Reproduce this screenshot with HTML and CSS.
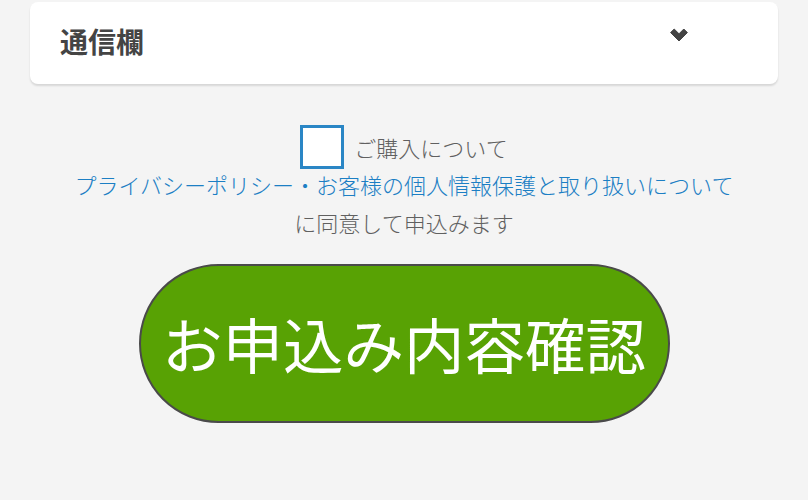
FILE: index.html
```html
<!DOCTYPE html>
<html lang="ja">
<head>
<meta charset="utf-8">
<link rel="stylesheet" href="styles.css">
</head>
<body>
<div class="page">
  <div class="card">
    <h2 class="card-title">通信欄</h2>
    <svg class="chevron" viewBox="0 0 18 14" width="18" height="14" aria-hidden="true">
      <path d="M0.6 4.6 L4.2 1 L9 5.8 L13.8 1 L17.4 4.6 L9 13 Z" fill="#444" stroke="#444" stroke-width="1" stroke-linejoin="round"/>
    </svg>
  </div>

  <div class="agree">
    <label class="agree-row">
      <span class="checkbox"></span>
      <span class="agree-text">ご購入について</span>
    </label>
    <div class="agree-line"><a class="link" href="#">プライバシーポリシー・お客様の個人情報保護と取り扱いについて</a></div>
    <div class="agree-line">に同意して申込みます</div>
  </div>

  <div class="btn-wrap">
    <button class="submit" type="button">お申込み内容確認</button>
  </div>
</div>
</body>
</html>
```

FILE: styles.css
```css
* { box-sizing: border-box; }
html, body {
  margin: 0;
  padding: 0;
  background: #f4f4f4;
  font-family: "Noto Sans CJK JP", "Noto Sans", sans-serif;
}
.page {
  padding: 2px 30px 0;
}
.card {
  background: #fff;
  border-radius: 8px;
  height: 82px;
  box-shadow: 0 2px 2px rgba(0, 0, 0, 0.12);
  display: flex;
  align-items: center;
  justify-content: space-between;
  padding: 0 90px 0 30px;
}
.card-title {
  margin: -4px 0 0;
  font-size: 28px;
  font-weight: 700;
  color: #444;
  line-height: 1;
}
.chevron {
  display: block;
  margin-top: -16px;
}
.agree {
  margin-top: 44px;
  text-align: center;
  font-size: 22px;
  font-weight: 300;
  color: #606060;
}
.agree-row {
  display: flex;
  justify-content: center;
  align-items: center;
  height: 38px;
  gap: 10px;
}
.checkbox {
  flex: none;
  width: 44px;
  height: 44px;
  border: 3px solid #2a86c5;
  background: #fff;
}
.agree-text {
  line-height: 38px;
}
.agree-line {
  line-height: 37.5px;
}
.link {
  color: #1c7fc4;
  text-decoration: none;
}
.btn-wrap {
  display: flex;
  justify-content: center;
  margin-top: 23px;
}
.submit {
  width: 531px;
  height: 159px;
  border: 2px solid #4a4a4a;
  border-radius: 80px;
  background: #58a204;
  color: #fff;
  font-family: "Noto Sans CJK JP", "Noto Sans", sans-serif;
  font-size: 60.5px;
  line-height: 1;
  padding: 0;
  display: flex;
  align-items: center;
  justify-content: center;
}
```
